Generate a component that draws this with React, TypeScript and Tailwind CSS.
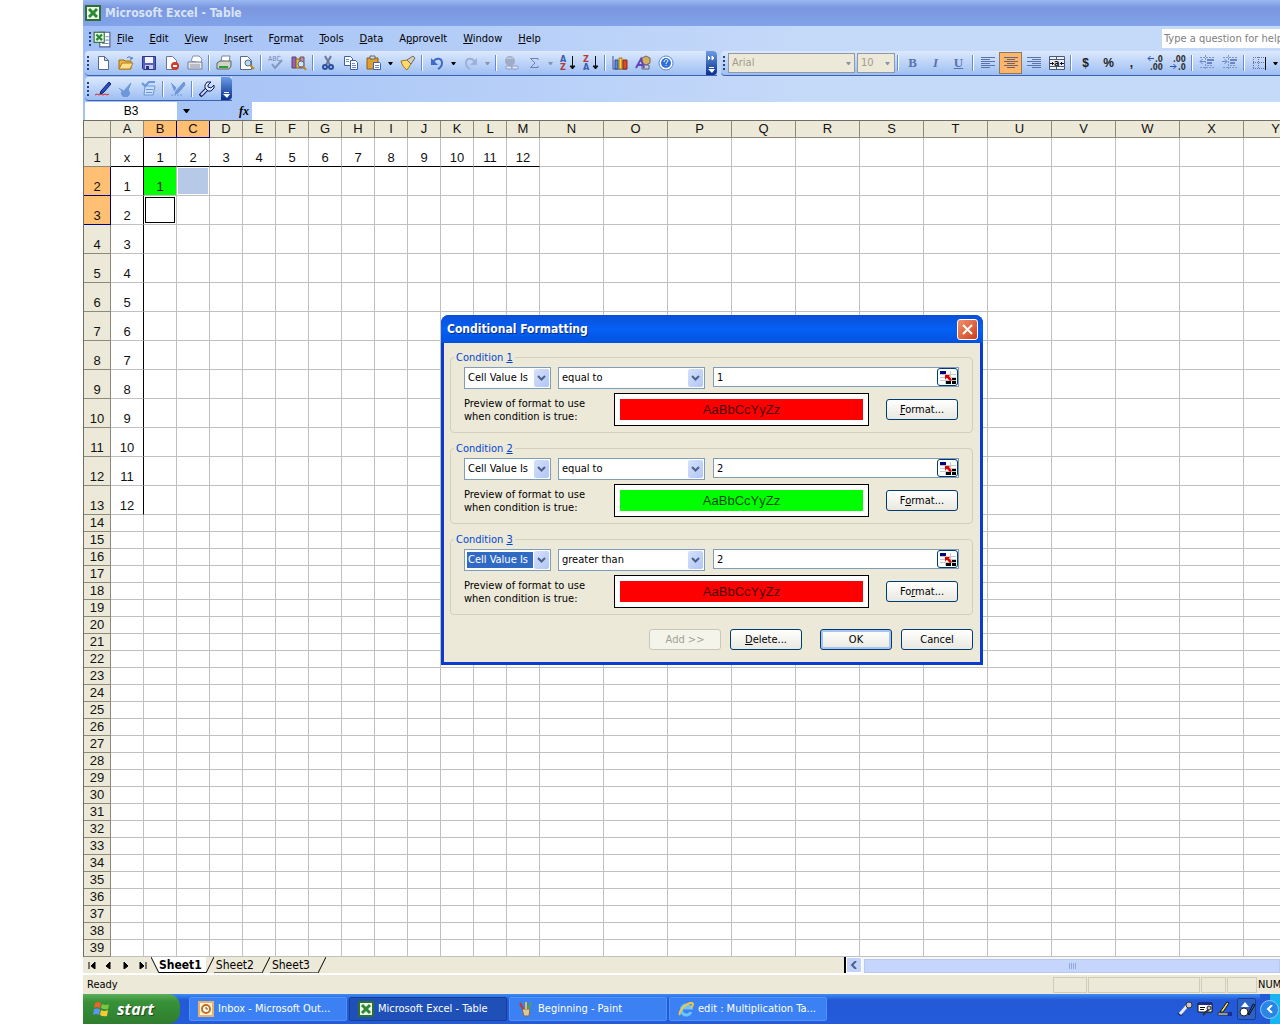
import type { ReactNode } from "react";
import clsx from "clsx";

const icons: Record<string, ReactNode> = {
  New: <path d="M3.5 1.5h6l4 4v9h-10zM9.5 1.5v4h4" fill="#fff" stroke="#5a6a8c" />,
  Open: (
    <>
      <path d="M1 5h5l1 1h6v8H1z" fill="#f0b93c" stroke="#a06d10" />
      <path d="M4 8h11l-3 6H1z" fill="#ffe08a" stroke="#b07c1c" />
      <path d="M9 3c2-2 4-1 5 1m0-2v2h-2" fill="none" stroke="#3c62b4" />
    </>
  ),
  Save: (
    <>
      <path d="M1.5 1.5h13v13h-12l-1-1z" fill="#5560c0" stroke="#2d3583" />
      <path d="M4 2h8v6H4z" fill="#f2f4ff" />
      <path d="M4 10h8v4H4z" fill="#c8cbe8" />
      <path d="M5 11h3v3H5z" fill="#2d3583" />
    </>
  ),
  Permission: (
    <>
      <path d="M2.5 1.5h6l4 4v9h-10z" fill="#fff" stroke="#6a7590" />
      <circle cx="11" cy="11" r="4" fill="#d83a20" />
      <path d="M9 11h4" stroke="#fff" strokeWidth="2" />
    </>
  ),
  "E-mail": (
    <>
      <path d="M4 6l2-5h6l3 3-1 4z" fill="#fff" stroke="#8a90a8" />
      <path d="M1 7h14v7H1z" fill="#e6e6ea" stroke="#777e96" />
      <path d="M3 10h10M3 12h10" stroke="#8a90a8" />
    </>
  ),
  Print: (
    <>
      <path d="M5 6l1-5h8l-1 6z" fill="#fff" stroke="#7c8494" />
      <path d="M1 8l3-2h11v5l-2 3H1z" fill="#cfd3c8" stroke="#59645c" />
      <path d="M3 12h9" stroke="#2c9c3a" strokeWidth="2" />
    </>
  ),
  "Print Preview": (
    <>
      <path d="M1.5 1.5h7l4 4v9h-11z" fill="#fff" stroke="#5a6a8c" />
      <circle cx="9" cy="8" r="3" fill="#b8dcf4" stroke="#5a6a8c" />
      <path d="M11 10l4 4" stroke="#b98a20" strokeWidth="2" />
    </>
  ),
  Spelling: (
    <>
      <text x="0" y="6" fontSize="7" fill="#7086b8">ABC</text>
      <path d="M4 9l3 4 7-8" fill="none" stroke="#8296c2" strokeWidth="2" />
    </>
  ),
  Research: (
    <>
      <path d="M1 2h4v11H1z" fill="#9a62b4" stroke="#5d3f7c" />
      <path d="M5 4h4v9H5z" fill="#e8b84c" stroke="#8c6a20" />
      <path d="M9 2h4v11H9z" fill="#c08a9c" stroke="#70505c" />
      <circle cx="10" cy="9" r="3" fill="#cfe6f8" stroke="#5a6a8c" />
      <path d="M12 11l3 4" stroke="#b98a20" strokeWidth="2" />
    </>
  ),
  Cut: (
    <>
      <path d="M5 1l5 9M11 1L6 10" stroke="#6a7a98" strokeWidth="2" fill="none" />
      <circle cx="5" cy="12" r="2" fill="none" stroke="#2e4f9e" strokeWidth="2" />
      <circle cx="11" cy="12" r="2" fill="none" stroke="#2e4f9e" strokeWidth="2" />
    </>
  ),
  Copy: (
    <>
      <path d="M1.5 1.5h6l2 2v7h-8z" fill="#fff" stroke="#3c5fae" />
      <path d="M7.5 5.5h5l2 2v7h-7z" fill="#fff" stroke="#3c5fae" />
      <path d="M3 4.5h3M3 6.5h3M9 8.5h3M9 10.5h4M9 12.5h4" stroke="#6d8bd0" />
    </>
  ),
  Paste: (
    <>
      <path d="M1 3h11v11H1z" fill="#e0a030" stroke="#8c5c14" />
      <path d="M4 1h5v3H4z" fill="#d8d8d8" stroke="#666" />
      <path d="M7.5 7.5h6l1 1v6h-7z" fill="#fff" stroke="#3c5fae" />
      <path d="M9 10.5h4M9 12.5h4" stroke="#6d8bd0" />
    </>
  ),
  "Format Painter": (
    <>
      <path d="M1 6l6-1 4 4-4 6c-3-2-5-5-6-9z" fill="#ffd96a" stroke="#a57a1c" />
      <path d="M7 5l4 4 4-6-2-2z" fill="#d6d0c0" stroke="#70685a" />
    </>
  ),
  Undo: (
    <>
      <path d="M4 7c3-5 9-4 9 1 0 3-2 5-4 6" fill="none" stroke="#3e6bc8" strokeWidth="2" />
      <path d="M2 3v7h7z" fill="#3e6bc8" />
    </>
  ),
  Redo: (
    <>
      <path d="M12 7C9 2 3 3 3 8c0 3 2 5 4 6" fill="none" stroke="#9db0d6" strokeWidth="2" />
      <path d="M14 3v7H7z" fill="#9db0d6" />
    </>
  ),
  Hyperlink: (
    <>
      <circle cx="7" cy="6" r="5" fill="#a0abc8" />
      <path d="M4 4c2-2 4 0 6-1" stroke="#d0d8ec" fill="none" />
      <rect x="3" y="11" width="6" height="3" rx="1" fill="#dfe6f6" stroke="#8b98bc" />
      <rect x="9" y="11" width="6" height="3" rx="1" fill="#dfe6f6" stroke="#8b98bc" />
    </>
  ),
  AutoSum: <path d="M12 5V3.5H4.5L9 8l-4.5 4.5H12V11" fill="none" stroke="#6b80b4" />,
  "Sort Ascending": (
    <>
      <text x="0" y="7" fontSize="9" fontWeight="bold" fill="#3c5fae">A</text>
      <text x="0" y="15" fontSize="9" fontWeight="bold" fill="#b43a3a">Z</text>
      <path d="M12.5 1v13M10 11l2.5 3 2.5-3z" fill="#111" stroke="#111" />
    </>
  ),
  "Sort Descending": (
    <>
      <text x="0" y="7" fontSize="9" fontWeight="bold" fill="#b43a3a">Z</text>
      <text x="0" y="15" fontSize="9" fontWeight="bold" fill="#3c5fae">A</text>
      <path d="M12.5 1v13M10 11l2.5 3 2.5-3z" fill="#111" stroke="#111" />
    </>
  ),
  "Chart Wizard": (
    <>
      <path d="M1 1v13h14" fill="none" stroke="#40507c" />
      <path d="M3 5h3v9H3z" fill="#5c8ae0" stroke="#2c4a94" />
      <path d="M7 3h3v11H7z" fill="#ffd23c" stroke="#a07810" />
      <path d="M11 5h4v9h-4z" fill="#d84a28" stroke="#8c2810" />
    </>
  ),
  Drawing: (
    <>
      <path d="M7 3l4-2 4 2v5l-4 2-4-2z" fill="#d8b05c" stroke="#6e6470" />
      <path d="M7 10h7v4H7z" fill="#c7cce0" stroke="#59607c" />
      <path d="M1 13l5-9 3 9M3 10h5" fill="none" stroke="#6247b8" strokeWidth="2" />
    </>
  ),
  Help: (
    <>
      <circle cx="8" cy="8" r="7" fill="#fff" stroke="#5b86d8" />
      <circle cx="8" cy="8" r="5" fill="#2f6fdc" />
      <path d="M6 7c0-3 4-3 4-1 0 1-2 1-2 3m0 1v1" fill="none" stroke="#fff" />
    </>
  ),
  Sign: (
    <>
      <path d="M14 1l2 2-8 9-3 1 1-3z" fill="#2c50d0" stroke="#0a1a60" />
      <path d="M0 14l2-1 2 1 2-1 2 1 2-1 2 1 2-1" fill="none" stroke="#e02020" />
    </>
  ),
  Approve: <path d="M1 7l4 4 8-9-3 7a4 4 0 1 1-5 0" fill="#6c97d8" stroke="#6c97d8" />,
  "Approve List": (
    <>
      <path d="M4 5h10l-2 9H3z" fill="#c9dcf8" stroke="#6c97d8" />
      <path d="M5 8.5h7M5 11.5h6" stroke="#6c97d8" />
      <path d="M1 2l3 3 4-4h6" fill="none" stroke="#6c97d8" strokeWidth="2" />
    </>
  ),
  Clear: (
    <>
      <path d="M14 1l1 3-7 8-3 1 1-3zM1 2l5 5-2 3" fill="#6c97d8" stroke="#6c97d8" />
      <path d="M1 14h12" stroke="#6c97d8" strokeDasharray="2 1" />
    </>
  ),
  Setup: (
    <>
      <path d="M1 15l8-8" stroke="#0a1a60" strokeWidth="4" />
      <path d="M2 14l7-7" stroke="#c8dcfc" strokeWidth="2" />
      <path d="M12 1H8L6 4v3l3 3h3l3-3V4l-3 3-3-1V4z" fill="#dce8fc" stroke="#0a1a60" />
    </>
  ),
  "Align Left": (
    <path d="M1 2.5h14M1 4.5h9M1 6.5h14M1 8.5h9M1 10.5h14M1 12.5h9" stroke="#5b72ac" />
  ),
  Center: <path d="M1 2.5h14M4 4.5h8M1 6.5h14M4 8.5h8M1 10.5h14M4 12.5h8" stroke="#6c6470" />,
  "Align Right": (
    <path d="M1 2.5h14M6 4.5h9M1 6.5h14M6 8.5h9M1 10.5h14M6 12.5h9" stroke="#5b72ac" />
  ),
  "Merge and Center": (
    <>
      <path d="M.5 1.5h15v13H.5zM.5 4.5h15M.5 11.5h15M7.5 1.5v3M7.5 11.5v3" fill="#e8f0fc" stroke="#4c5874" />
      <text x="5" y="11" fontSize="9" fontWeight="bold" fill="#111">a</text>
      <path d="M1 8.5h4M3.5 7v3M11 8.5h4M12.5 7v3" stroke="#111" />
    </>
  ),
  "Increase Decimal": (
    <>
      <path d="M1 3.5h6M3.5 1L1 3.5 3.5 6" fill="none" stroke="#2c50b8" />
      <text x="8" y="7" fontSize="8" fontWeight="bold" fill="#333">.0</text>
      <text x="3" y="15" fontSize="8" fontWeight="bold" fill="#333">.00</text>
    </>
  ),
  "Decrease Decimal": (
    <>
      <text x="3" y="7" fontSize="8" fontWeight="bold" fill="#333">.00</text>
      <text x="8" y="15" fontSize="8" fontWeight="bold" fill="#333">.0</text>
      <path d="M0 11.5h6M3.5 9L6 11.5 3.5 14" fill="none" stroke="#2c50b8" />
    </>
  ),
  "Decrease Indent": (
    <>
      <path d="M1 2.5h14M8 10.5h5M1 12.5h14M6.5 0v15" stroke="#7d95c8" strokeDasharray="2 1" />
      <path d="M8 5h7M8 8h5" stroke="#6b86c4" strokeWidth="2" />
      <path d="M6 6.5H1M3.5 4L1 6.5 3.5 9" fill="none" stroke="#6b86c4" />
    </>
  ),
  "Increase Indent": (
    <>
      <path d="M1 2.5h14M8 10.5h5M1 12.5h14M6.5 0v15" stroke="#7d95c8" strokeDasharray="2 1" />
      <path d="M8 5h7M8 8h5" stroke="#6b86c4" strokeWidth="2" />
      <path d="M0 6.5h5M2.5 4L5 6.5 2.5 9" fill="none" stroke="#6b86c4" />
    </>
  ),
  Borders: (
    <>
      <path d="M2 2.5h11M2 7.5h11M2 13.5h11M2.5 2v12M7.5 2v12" stroke="#66769c" strokeDasharray="1 1" />
      <path d="M14.5 2v13" stroke="#111" />
    </>
  ),
  Excel: (
    <>
      <rect x="1" y="1" width="14" height="14" fill="#eef6ea" stroke="#2e7034" strokeWidth="2" />
      <path d="M4 4l8 8M12 4l-8 8" stroke="#2a8a38" strokeWidth="3" />
    </>
  ),
  Workbook: (
    <>
      <path d="M6 2h9v13H6z" fill="#fff" stroke="#4c5f8c" />
      <path d="M11 6h3M11 9h3M8 12h6" stroke="#7a92c8" />
      <rect x="1" y="2" width="9" height="9" fill="#eef6ea" stroke="#2e7034" />
      <path d="M3 4l5 5M8 4L3 9" stroke="#2a8a38" strokeWidth="2" />
    </>
  ),
  Outlook: (
    <>
      <rect x="1" y="1" width="14" height="14" fill="#fff4d8" stroke="#e8b070" strokeWidth="2" />
      <circle cx="8" cy="8" r="4" fill="#fff" stroke="#c0701c" strokeWidth="2" />
      <path d="M8 6v2h2" fill="none" stroke="#80460c" />
    </>
  ),
  Paint: (
    <>
      <path d="M4 8h8l-1 7H6z" fill="#d8c8a0" stroke="#806848" />
      <path d="M5 8L2 2" stroke="#c83828" strokeWidth="2" />
      <path d="M8 8V1" stroke="#f0c030" strokeWidth="2" />
      <path d="M10 8l3-6" stroke="#58a048" strokeWidth="2" />
    </>
  ),
  Explorer: (
    <>
      <path d="M13 11a5 5 0 1 1 0-4H5" fill="none" stroke="#6cc4f8" strokeWidth="3" />
      <path d="M2 14C0 10 9 1 14 2c2 1 0 4-1 5" fill="none" stroke="#f4c83c" strokeWidth="2" />
    </>
  ),
  Microphone: (
    <>
      <path d="M1 12c1 2 3 3 5 1" fill="none" stroke="#111" />
      <path d="M3 13l7-8" stroke="#e8e8e8" strokeWidth="3" />
      <circle cx="12" cy="4" r="3" fill="#c8c8c8" stroke="#333" />
    </>
  ),
  Tools: (
    <>
      <path d="M1 2h14v9H1z" fill="#fff" stroke="#111" />
      <path d="M1 3h14" stroke="#1c2c90" strokeWidth="2" />
      <path d="M3 6.5h5M3 8.5h4" stroke="#111" />
      <path d="M6 14l6-6" stroke="#333" strokeWidth="2" />
      <circle cx="12" cy="7" r="2" fill="#ccc" stroke="#222" />
    </>
  ),
  Handwriting: (
    <>
      <path d="M3 11l7-10 2 1-6 9z" fill="#f8e060" stroke="#111" />
      <path d="M1 12h10v2H1z" fill="#fff" stroke="#333" />
      <path d="M11 11h4v4h-4z" fill="#1c2c90" />
    </>
  ),
  "Drawing Pad": (
    <>
      <path d="M6 1l4 5H2z" fill="#fff" />
      <circle cx="5" cy="11" r="4" fill="#fff" stroke="#222" />
      <path d="M9 13l5-10 2 1-6 10z" fill="#3050c0" stroke="#111" />
    </>
  ),
};

function Icon({ name }: { name: string }) {
  return (
    <svg className="size-4 shrink-0" viewBox="0 0 16 16" aria-hidden="true">
      {icons[name]}
    </svg>
  );
}

function ToolButton({ name, active, children }: { name: string; active?: boolean; children?: ReactNode }) {
  return (
    <button
      aria-label={name}
      className={clsx(
        "flex h-[22px] w-[23px] shrink-0 items-center justify-center",
        active && "border border-[#8a7a60] bg-[#ffb66c]",
      )}
    >
      {children ?? <Icon name={name} />}
    </button>
  );
}

function Arrow({ dim, label = "More choices" }: { dim?: boolean; label?: string }) {
  return (
    <button aria-label={label} className="flex h-[22px] w-[11px] shrink-0 items-center justify-center">
      <svg className="h-[3px] w-[5px]" viewBox="0 0 5 3" aria-hidden="true">
        <path d="M0 0h5L3 3H2z" fill={dim ? "#8296a8" : "#000"} />
      </svg>
    </button>
  );
}

function Separator() {
  return (
    <span className="flex h-[16px] w-[6px] shrink-0 justify-center">
      <span className="w-px bg-[#6a8ccb]" />
      <span className="w-px bg-white" />
    </span>
  );
}

function Grip() {
  return (
    <span className="flex w-[6px] shrink-0 flex-col items-center gap-[2px]">
      {[0, 1, 2, 3].map((n) => (
        <span key={n} className="size-[2px] bg-[#27417a]" />
      ))}
    </span>
  );
}

function Overflow({ chevrons }: { chevrons?: boolean }) {
  return (
    <button
      aria-label="Toolbar Options"
      className="flex w-[11px] shrink-0 flex-col items-center justify-end gap-1 self-stretch rounded-r-sm bg-linear-to-b from-[#6e9be8] to-[#0a2f8c] pb-px"
    >
      <svg className="h-[18px] w-[7px]" viewBox="0 0 7 18" aria-hidden="true">
        {chevrons && <path d="M0 0l2 2-2 2zM4 0l2 2-2 2z" fill="#fff" stroke="#fff" />}
        <path d="M1 11.5h5" stroke="#fff" />
        <path d="M0 13h7l-3 4z" fill="#fff" />
      </svg>
    </button>
  );
}

const menus = [
  ["", "F", "ile"],
  ["", "E", "dit"],
  ["", "V", "iew"],
  ["", "I", "nsert"],
  ["F", "o", "rmat"],
  ["", "T", "ools"],
  ["", "D", "ata"],
  ["A", "p", "proveIt"],
  ["", "W", "indow"],
  ["", "H", "elp"],
];

const standardTools = [
  "New", "Open", "Save", "Permission", "E-mail", "|", "Print", "Print Preview", "|", "Spelling", "Research", "|",
  "Cut", "Copy", "Paste", "v", "Format Painter", "|", "Undo", "v", "Redo", "-", "|", "Hyperlink", "AutoSum", "-",
  "Sort Ascending", "Sort Descending", "|", "Chart Wizard", "Drawing", "Help",
];
const signTools = ["Sign", "Approve", "Approve List", "|", "Clear", "|", "Setup"];
const alignTools = ["Align Left", "Center", "Align Right", "Merge and Center"];
const numberTools = ["Increase Decimal", "Decrease Decimal", "|", "Decrease Indent", "Increase Indent", "|", "Borders", "v"];

function Tools({ items }: { items: string[] }) {
  return (
    <>
      {items.map((t, i) => {
        if (t === "|") return <Separator key={i} />;
        if (t === "v" || t === "-") return <Arrow key={i} dim={t === "-"} />;
        return <ToolButton key={i} name={t} active={t === "Center"} />;
      })}
    </>
  );
}

function Toolbars() {
  const bar = "flex items-center rounded-l-sm border-b border-[#3b62b0] bg-linear-to-b from-[#dce9fd] to-[#9dbef2]";
  return (
    <div className="bg-linear-to-r from-[#a2c0f6] to-[#c5d9f9] to-60%">
      <nav className="flex h-[25px] items-center pl-1">
        <Grip />
        <span className="flex w-6">
          <svg className="size-[18px]" viewBox="0 0 16 16" aria-hidden="true">
            {icons.Workbook}
          </svg>
        </span>
        <div className="flex gap-4">
          {menus.map(([pre, key, rest]) => (
            <button key={key + rest} className="whitespace-nowrap">
              {pre}
              <u>{key}</u>
              {rest}
            </button>
          ))}
        </div>
        <input
          aria-label="Ask a question"
          placeholder="Type a question for help"
          className="ml-auto h-[19px] w-[118px] bg-white pl-[2px] placeholder:text-[#808080]"
        />
      </nav>
      <div className="flex h-[25px] gap-1 overflow-hidden pl-[2px]">
        <div className={clsx(bar, "w-[632px] shrink-0")}>
          <Grip />
          <Tools items={standardTools} />
          <span className="flex-1" />
          <Overflow chevrons />
        </div>
        <div className={clsx(bar, "flex-1")}>
          <Grip />
          <div className="ml-px flex h-5 w-[127px] shrink-0 items-center border border-[#8f9aa8] bg-[#ece9d8] text-[#a09c8c]">
            <select aria-label="Font" disabled className="flex-1 appearance-none pl-[3px]">
              <option>Arial</option>
            </select>
            <Arrow dim label="Font list" />
          </div>
          <div className="ml-[2px] flex h-5 w-[38px] shrink-0 items-center border border-[#8f9aa8] bg-[#ece9d8] text-[#a09c8c]">
            <select aria-label="Font size" disabled className="w-6 appearance-none pl-[3px]">
              <option>10</option>
            </select>
            <Arrow dim label="Font size list" />
          </div>
          <Separator />
          <div className="flex text-[13px] font-bold text-[#5b72ac] [font-family:'Liberation_Serif',serif]">
            <ToolButton name="Bold">B</ToolButton>
            <ToolButton name="Italic"><i>I</i></ToolButton>
            <ToolButton name="Underline"><u>U</u></ToolButton>
          </div>
          <Separator />
          <Tools items={alignTools} />
          <Separator />
          <div className="flex text-[12px] font-bold text-[#222] [font-family:'Liberation_Sans',sans-serif]">
            <ToolButton name="Currency Style">$</ToolButton>
            <ToolButton name="Percent Style">%</ToolButton>
            <ToolButton name="Comma Style">,</ToolButton>
          </div>
          <Tools items={numberTools} />
        </div>
      </div>
      <div className="flex h-[26px] pt-px pb-px pl-[2px]">
        <div className={clsx(bar, "w-[147px]")}>
          <Grip />
          <Tools items={signTools} />
          <span className="flex-1" />
          <Overflow />
        </div>
      </div>
      <div className="flex h-[18px] items-center pl-[2px] text-xs">
        <input
          aria-label="Name Box"
          defaultValue="B3"
          className="h-full w-[92px] bg-white text-center [font-family:'Liberation_Sans',sans-serif]"
        />
        <span className="flex w-[18px] justify-center">
          <svg className="h-1 w-[7px]" viewBox="0 0 7 4" aria-hidden="true">
            <path d="M0 0h7L4 4H3z" />
          </svg>
        </span>
        <button
          aria-label="Insert Function"
          className="ml-auto w-[57px] pr-[3px] text-right font-bold italic [font-family:'Liberation_Serif',serif]"
        >
          fx
        </button>
        <input aria-label="Formula Bar" className="h-full w-[calc(100%-167px)] shrink-0 bg-white" />
      </div>
    </div>
  );
}

const columns = "ABCDEFGHIJKLMNOPQRSTUVWXY".split("");
const rows = Array.from({ length: 39 }, (_, i) => i + 1);

function cellText(col: string, row: number) {
  const c = columns.indexOf(col);
  if (row === 1) return c === 0 ? "x" : c <= 12 ? c : "";
  if (c === 0 && row <= 13) return row - 1;
  return col === "B" && row === 2 ? 1 : "";
}

function Cell({ col, row }: { col: string; row: number }) {
  const key = col + row;
  return (
    <td
      className={clsx(
        "border-r border-b p-0 text-center align-bottom",
        col === "A" && row <= 13 ? "border-r-black" : "border-r-[#c0c0c0]",
        row === 1 && columns.indexOf(col) <= 12 ? "border-b-black" : "border-b-[#c0c0c0]",
        key === "B2" && "bg-[#00ff00]",
      )}
    >
      {key === "C2" && <div className="m-px h-[26px] bg-[#b6cae8]" />}
      {key === "B3" && <div className="m-px h-[26px] border border-black" />}
      {cellText(col, row)}
    </td>
  );
}

function Sheet() {
  return (
    <div className="overflow-hidden border-t border-l border-[#716f64] bg-white">
      <table className="w-[1224px] table-fixed border-separate border-spacing-0 text-[13px] leading-4 text-[#111] [font-family:'Liberation_Sans',sans-serif]">
        <colgroup>
          <col className="w-[27px]" />
          {columns.map((c, i) => (
            <col key={c} className={i <= 12 ? "w-[33px]" : "w-16"} />
          ))}
        </colgroup>
        <thead>
          <tr className="h-[17px]">
            <th aria-label="Select all" className="border-r border-b border-[#8c8a7c] bg-[#ece9d8] p-0" />
            {columns.map((c) => (
              <th
                key={c}
                className={clsx(
                  "border-r border-b p-0 font-normal",
                  c === "B" || c === "C" ? "border-[#000080] bg-[#ffc073]" : "border-[#8c8a7c] bg-[#ece9d8]",
                )}
              >
                {c}
              </th>
            ))}
          </tr>
        </thead>
        <tbody>
          {rows.map((r) => (
            <tr key={r} className={r <= 13 ? "h-[29px]" : "h-[17px]"}>
              <th
                className={clsx(
                  "border-r border-b p-0 align-bottom font-normal",
                  r === 2 || r === 3 ? "border-[#000080] bg-[#ffc073]" : "border-[#8c8a7c] bg-[#ece9d8]",
                )}
              >
                {r}
              </th>
              {columns.map((c) => (
                <Cell key={c} col={c} row={r} />
              ))}
            </tr>
          ))}
        </tbody>
      </table>
    </div>
  );
}

function Slash() {
  return (
    <svg className="h-4 w-2 shrink-0" viewBox="0 0 8 16" aria-hidden="true">
      <path d="M0 16L8 0" stroke="#000" />
    </svg>
  );
}

function SheetTabs() {
  const arrows = [
    ["First sheet", "M1 0v7M7 0v7L3 4z"],
    ["Previous sheet", "M5 0v7L1 4z"],
    ["Next sheet", "M2 0v7l4-3z"],
    ["Last sheet", "M7 0v7M1 0v7l4-3z"],
  ];
  return (
    <div className="flex h-[18px] items-start border-b-2 border-white bg-[#ece9d8] text-[12px] leading-[17px]">
      {arrows.map(([label, d]) => (
        <button key={label} aria-label={label} className="flex h-[17px] w-[17px] items-center justify-center">
          <svg className="h-[7px] w-2" viewBox="0 0 8 7" aria-hidden="true">
            <path d={d} stroke="#000" />
          </svg>
        </button>
      ))}
      <svg className="h-4 w-2 shrink-0" viewBox="0 0 8 16" aria-hidden="true">
        <path d="M0 0h8v16z" fill="#fff" />
        <path d="M0 0l8 16" stroke="#000" />
      </svg>
      <button className="h-4 border-b border-black bg-white pr-1 font-bold">Sheet1</button>
      <Slash />
      <button className="h-4 border-b border-[#716f64] pr-2 pl-[2px]">Sheet2</button>
      <Slash />
      <button className="h-4 border-b border-[#716f64] pr-2 pl-[2px]">Sheet3</button>
      <Slash />
      <div className="ml-auto flex h-4 w-[436px] border-l-2 border-black bg-[#f4f6fd]">
        <button
          aria-label="Scroll left"
          className="flex w-4 items-center justify-center rounded-xs border border-white bg-[#c2d2fb]"
        >
          <svg className="size-2" viewBox="0 0 8 8" aria-hidden="true">
            <path d="M6 0L2 4l4 4" fill="none" stroke="#4d6185" strokeWidth="2" />
          </svg>
        </button>
        <div className="mt-[2px] ml-[2px] flex flex-1 items-center justify-center gap-px border border-[#b8c8f0] bg-[#c6d5fc]">
          {[0, 1, 2, 3].map((n) => (
            <span key={n} className="h-[6px] w-px bg-[#8fa8e0]" />
          ))}
        </div>
      </div>
    </div>
  );
}

function StatusBar() {
  const box = "h-4 border border-[#d0ccba]";
  return (
    <div className="flex h-[19px] items-end gap-px bg-[#ece9d8] pb-px pl-1">
      <span className="mr-auto leading-4">Ready</span>
      <span className={clsx(box, "w-[34px]")} />
      <span className={clsx(box, "w-[112px]")} />
      <span className={clsx(box, "w-[25px]")} />
      <span className={clsx(box, "w-[30px]")} />
      <span className="w-[22px] leading-4">NUM</span>
    </div>
  );
}

const tasks = [
  { icon: "Outlook", title: "Inbox - Microsoft Out..." },
  { icon: "Excel", title: "Microsoft Excel - Table" },
  { icon: "Paint", title: "Beginning - Paint" },
  { icon: "Explorer", title: "edit : Multiplication Ta..." },
];

function Taskbar() {
  return (
    <div className="flex h-[30px] items-center bg-linear-to-b from-[#3f8cf3] via-[#2359d6] via-20% to-[#245bdb] text-white">
      <button className="flex h-full w-[97px] items-center gap-[6px] rounded-r-xl bg-linear-to-b from-[#5cae5c] via-[#389238] via-25% to-[#2f7d2f] pl-[10px] text-base font-bold italic [font-family:'Open_Sans',sans-serif] [text-shadow:1px_1px_1px_#1c4a1c]">
        <svg className="size-[18px]" viewBox="0 0 18 18" aria-hidden="true">
          <path d="M2 3q3-2 6 0L7 8Q4 6 1 8z" fill="#f0602c" />
          <path d="M9 4q4 2 7 0l-1 5q-4 1-7-1z" fill="#7cc83c" />
          <path d="M1 9q3-1 6 0l-1 6q-3-2-6 0z" fill="#5c94f8" />
          <path d="M8 10q3 2 7 0l-1 6q-4 1-7-1z" fill="#f8cc30" />
        </svg>
        start
      </button>
      <div className="ml-[9px] flex gap-[2px]">
        {tasks.map((t) => (
          <button
            key={t.title}
            className={clsx(
              "flex h-6 w-[158px] items-center gap-1 overflow-hidden rounded-xs border pl-2 whitespace-nowrap",
              t.icon === "Excel" ? "border-[#173f94] bg-[#1e50b8]" : "border-[#4f92fa] bg-[#3c81f3]",
            )}
          >
            <Icon name={t.icon} />
            {t.title}
          </button>
        ))}
      </div>
      <div className="ml-auto flex items-center gap-1">
        <Icon name="Microphone" />
        <Icon name="Tools" />
        <Icon name="Handwriting" />
        <span className="flex h-[22px] w-[19px] items-center justify-center rounded-xs border border-[#173f94] bg-[#2c62c4]">
          <Icon name="Drawing Pad" />
        </span>
      </div>
      <div className="ml-1 flex h-full w-5 items-center overflow-hidden bg-linear-to-r from-[#2359d6] from-50% to-[#18b4f0] to-50%">
        <button
          aria-label="Show hidden icons"
          className="flex size-[19px] shrink-0 items-center justify-center rounded-full border border-[#8cc8fa] bg-[#2a86e4]"
        >
          <svg className="size-2" viewBox="0 0 8 8" aria-hidden="true">
            <path d="M6 0L2 4l4 4" fill="none" stroke="#fff" strokeWidth="2" />
          </svg>
        </button>
      </div>
    </div>
  );
}

function ComboBox({ label, value, className, focused }: { label: string; value: string; className: string; focused?: boolean }) {
  return (
    <div className={clsx("flex h-[22px] border border-[#7f9db9] bg-white p-px", className)}>
      <select
        aria-label={label}
        className={clsx(
          "m-px min-w-0 flex-1 appearance-none pl-px outline-none",
          focused && "bg-[#316ac5] text-white",
        )}
      >
        <option>{value}</option>
      </select>
      <span className="flex w-[15px] shrink-0 items-center justify-center rounded-xs bg-linear-to-br from-[#d5e0fc] to-[#b0c6f6]">
        <svg className="h-[6px] w-[9px]" viewBox="0 0 9 6" aria-hidden="true">
          <path d="M1 1l3.5 3.5L8 1" fill="none" stroke="#4d6185" strokeWidth="2" />
        </svg>
      </span>
    </div>
  );
}

const button =
  "h-[21px] w-[72px] rounded-[3px] border border-[#003c74] bg-linear-to-b from-white to-[#e9e8e0]";

const conditions = [
  { id: 1, operator: "equal to", value: "1", fill: "bg-[#ff0000]", format: ["", "F", "ormat..."] },
  { id: 2, operator: "equal to", value: "2", fill: "bg-[#00ff00]", format: ["F", "o", "rmat..."] },
  { id: 3, operator: "greater than", value: "2", fill: "bg-[#ff0000]", format: ["Fo", "r", "mat..."] },
];

function Condition({ id, operator, value, fill, format }: (typeof conditions)[number]) {
  return (
    <fieldset className="rounded-sm border border-[#d0d0bf] pb-[6px] pl-[13px]">
      <legend className="-ml-[10px] px-[2px] leading-[13px] text-[#0046d5]">
        Condition <u>{id}</u>
      </legend>
      <div className="flex items-start pt-[3px]">
        <ComboBox label={`Condition ${id} type`} value="Cell Value Is" className="w-[87px]" focused={id === 3} />
        <ComboBox label={`Condition ${id} operator`} value={operator} className="ml-[7px] w-[147px]" />
        <div className="ml-2 flex h-5 w-[246px] border border-[#7f9db9] bg-white">
          <input aria-label={`Condition ${id} value`} defaultValue={value} className="min-w-0 flex-1 pt-[2px] pl-[3px]" />
          <button
            aria-label="Select range"
            className="flex w-[21px] items-center justify-center rounded-[3px] border border-[#003c74] bg-white"
          >
            <svg className="h-[13px] w-4" viewBox="0 0 16 13" aria-hidden="true">
              <path d="M0 3.5h16M0 6.5h16M0 9.5h16M5.5 0v13M10.5 0v13" stroke="#c8c8c8" />
              <path d="M0 0h6v3H0z" fill="#000080" />
              <path d="M12 7h4v2h-4zM6 10h5v3H6zM12 10h4v3h-4z" />
              <path d="M5 4h5L9 5l3 4-2 1-3-3-2 1z" fill="#e00000" />
            </svg>
          </button>
        </div>
      </div>
      <div className="mt-1 flex items-center">
        <p className="w-[150px] leading-[13px]">
          Preview of format to use
          <br />
          when condition is true:
        </p>
        <div className="w-[255px] border border-black bg-white p-[5px]">
          <div className={clsx("h-[21px] text-center text-[13px] leading-[22px] text-black/75 [font-family:'Liberation_Sans',sans-serif]", fill)}>
            AaBbCcYyZz
          </div>
        </div>
        <button className={clsx(button, "ml-[17px]")}>
          {format[0]}
          <u>{format[1]}</u>
          {format[2]}
        </button>
      </div>
    </fieldset>
  );
}

function ConditionalFormattingDialog() {
  return (
    <div
      role="dialog"
      aria-label="Conditional Formatting"
      className="absolute top-[315px] left-[441px] w-[542px] rounded-t-lg bg-[#0a3cd0] px-[3px] pb-[3px]"
    >
      <div className="-mx-[3px] flex h-7 items-center justify-between rounded-t-lg bg-linear-to-b from-[#0a50d8] via-[#0560f4] to-[#0252e0] pr-[5px] pl-[6px]">
        <h2 className="text-xs font-bold text-white [text-shadow:1px_1px_#0a2a80]">Conditional Formatting</h2>
        <button
          aria-label="Close"
          className="flex size-[21px] items-center justify-center rounded-[3px] border border-white bg-linear-to-br from-[#f0906c] to-[#cc3c14]"
        >
          <svg className="size-[11px]" viewBox="0 0 11 11" aria-hidden="true">
            <path d="M1 1l9 9M10 1l-9 9" stroke="#fff" strokeWidth="2" />
          </svg>
        </button>
      </div>
      <div className="bg-[#ece9d8] pt-2 pr-[7px] pb-3 pl-[6px]">
        <div className="flex flex-col gap-[9px]">
          {conditions.map((c) => (
            <Condition key={c.id} {...c} />
          ))}
        </div>
        <div className="mt-[14px] flex justify-end gap-[9px]">
          <button disabled className="h-[21px] w-[72px] rounded-[3px] border border-[#c9c7ba] bg-[#f5f4ea] text-[#a1a192]">
            Add &gt;&gt;
          </button>
          <button className={button}>
            <u>D</u>elete...
          </button>
          <button className={clsx(button, "ml-[9px] shadow-[inset_0_0_0_2px_#a8c4f0]")}>OK</button>
          <button className={button}>Cancel</button>
        </div>
      </div>
    </div>
  );
}

export default function App() {
  return (
    <div className="relative min-h-screen overflow-hidden bg-white pl-[83px] text-[11px] leading-[14px] text-black [font-family:'DejaVu_Sans_Condensed','Noto_Sans',sans-serif]">
      <header className="flex h-[26px] items-center gap-1 bg-linear-to-b from-[#9ab8f2] via-[#7a96df] via-30% to-[#82a4ea] pl-[2px]">
        <Icon name="Excel" />
        <h1 className="text-xs font-bold text-[#d8e4f8]">Microsoft Excel - Table</h1>
      </header>
      <Toolbars />
      <Sheet />
      <SheetTabs />
      <StatusBar />
      <Taskbar />
      <ConditionalFormattingDialog />
    </div>
  );
}
